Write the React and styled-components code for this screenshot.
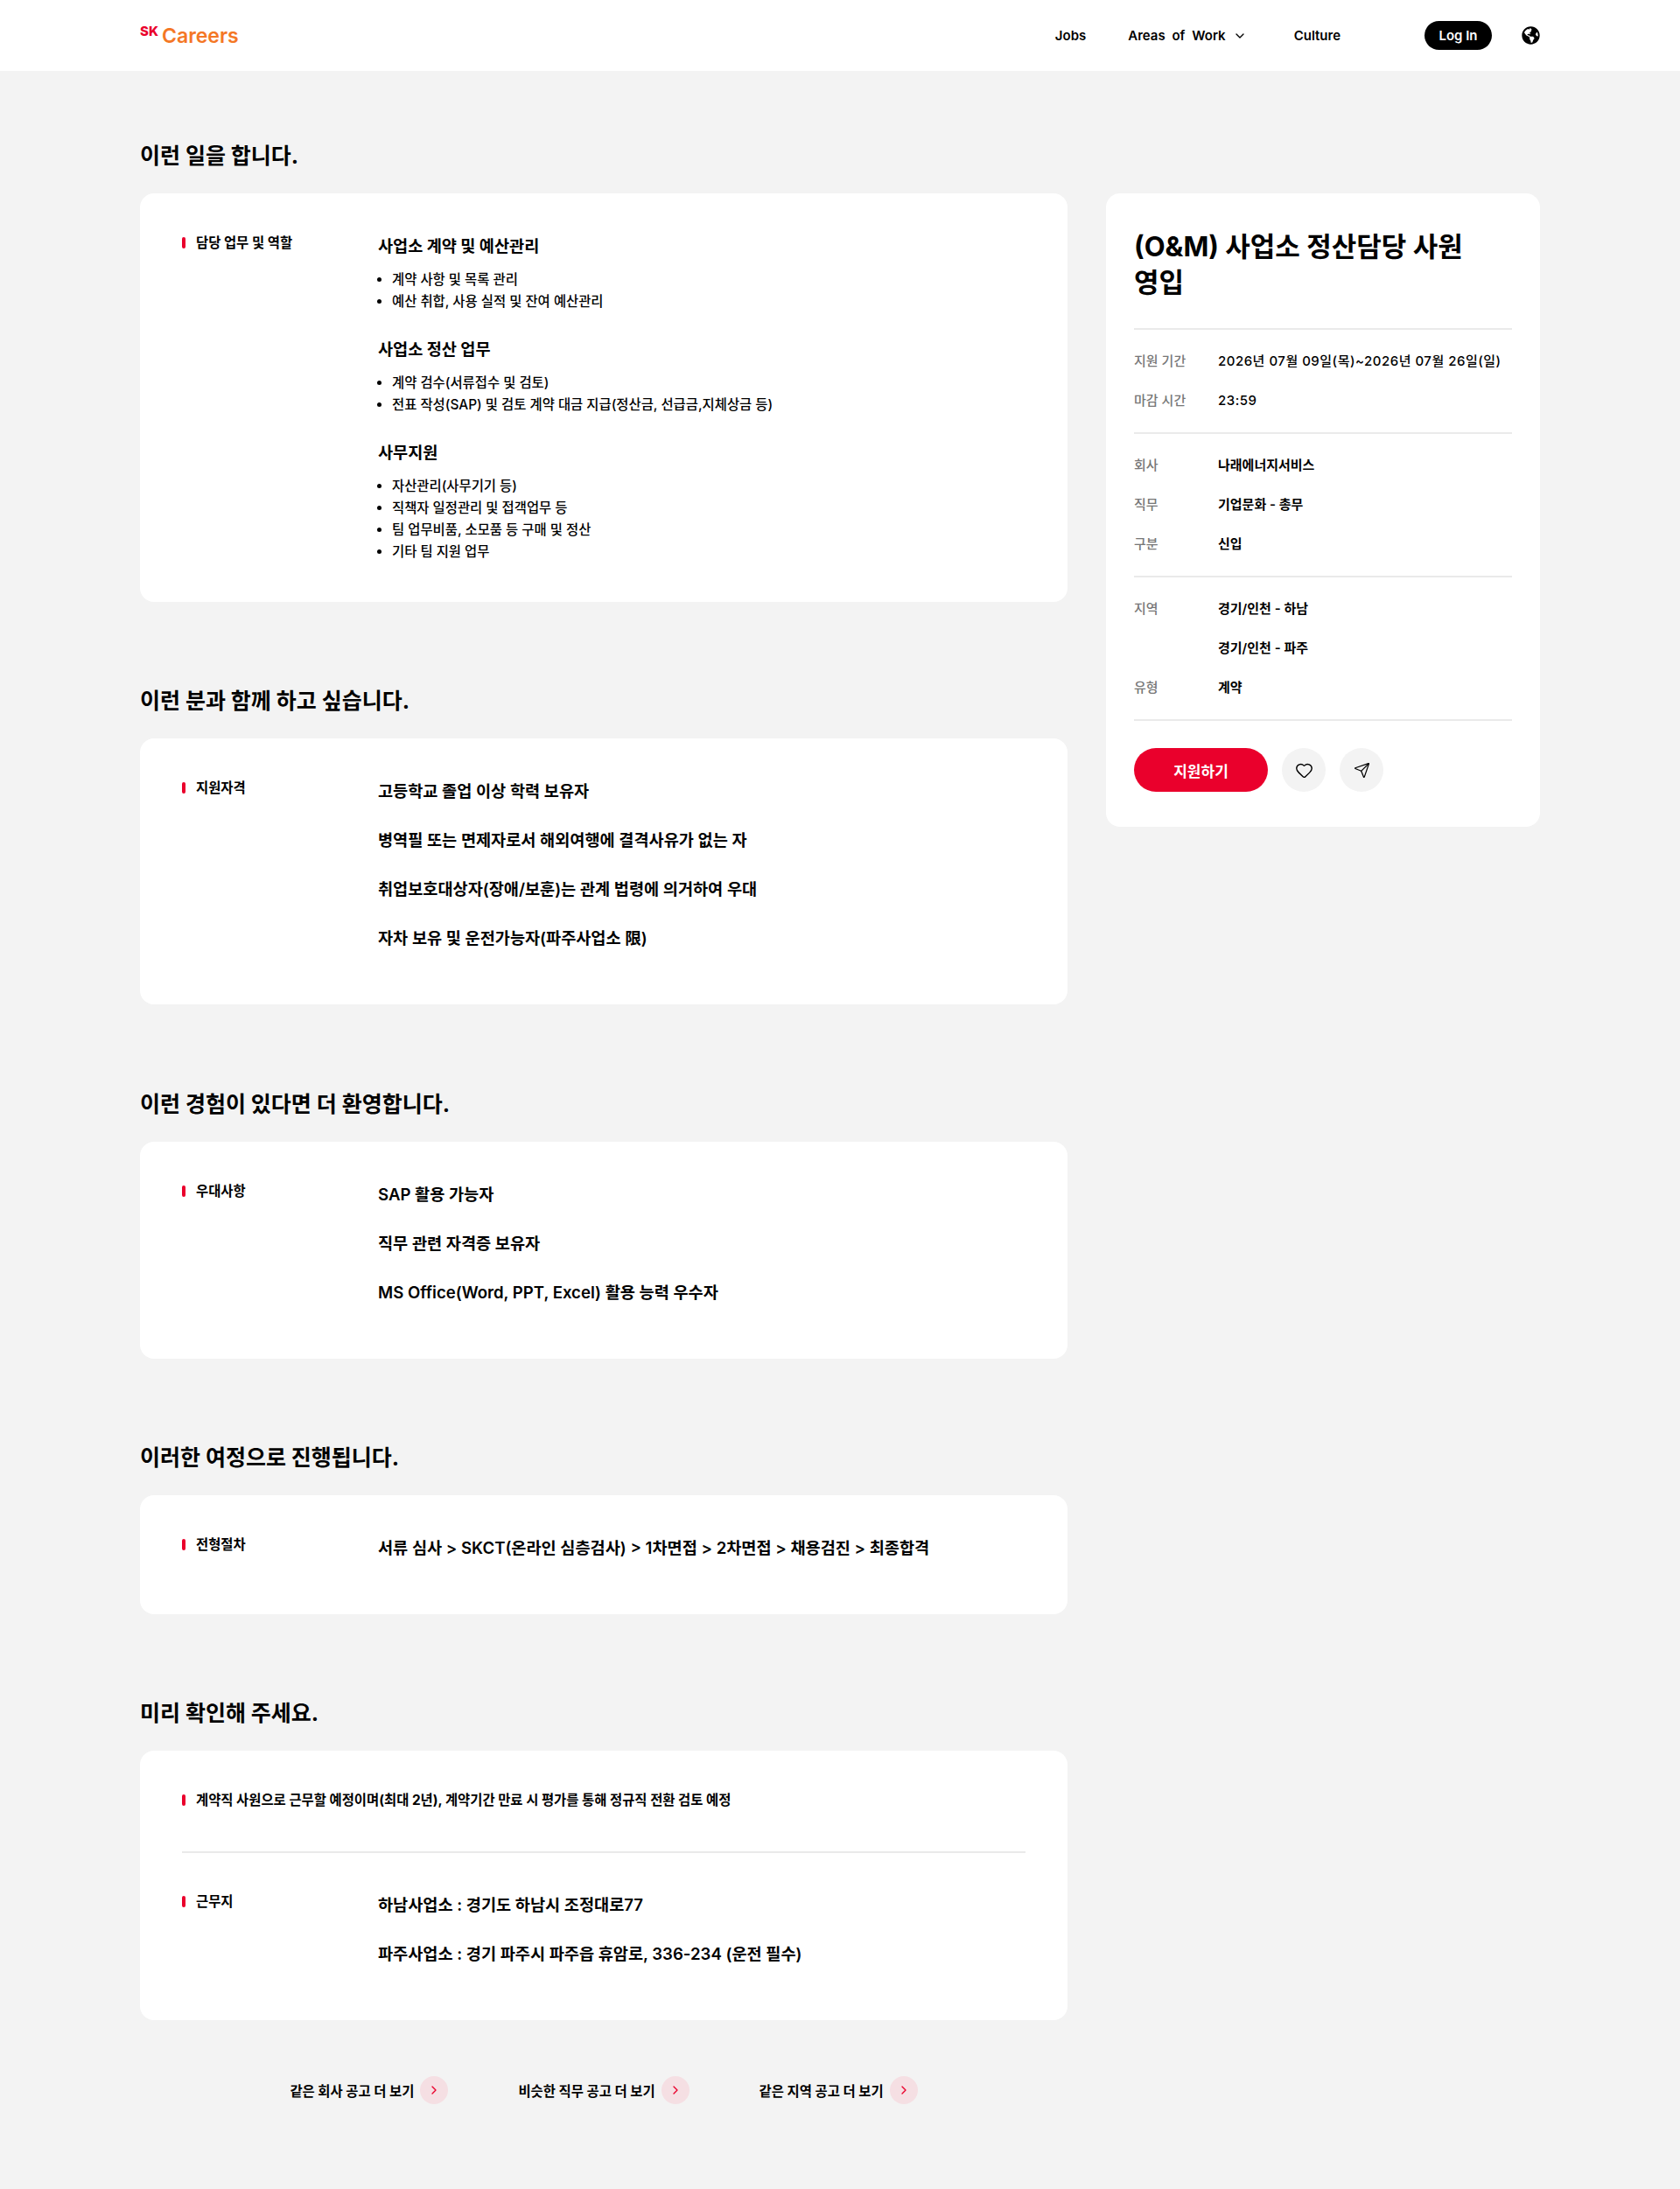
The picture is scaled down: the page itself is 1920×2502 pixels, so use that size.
import styled, { createGlobalStyle } from "styled-components";
import { ChevronDown, ChevronRight, Heart, Send } from "lucide-react";
import { FaGlobeAmericas } from "react-icons/fa";

const GlobalStyle = createGlobalStyle`
  * { box-sizing: border-box; }
  body {
    margin: 0;
    background: #f3f3f3;
    color: #000;
    font-family: "Inter", "Noto Sans CJK KR", sans-serif;
  }
`;

const Page = styled.div`
  min-height: 2502px;
  background: #f3f3f3;
`;

const Header = styled.header`
  height: 81px;
  background: #fff;
  padding: 0 160px;
  display: flex;
  align-items: center;
  justify-content: space-between;
`;

const Logo = styled.a`
  display: flex;
  align-items: flex-start;
  gap: 4px;
  font-family: "Inter", sans-serif;
  font-weight: 600;
`;

const LogoSk = styled.span`
  color: #ea002c;
  font-size: 15px;
  line-height: 14px;
  font-weight: 800;
`;

const LogoName = styled.span`
  color: #f47725;
  font-size: 23px;
  line-height: 24px;
`;

const Nav = styled.nav`
  display: flex;
  align-items: center;
  font-size: 15px;
  font-weight: 600;
  word-spacing: 4px;
`;

const NavLink = styled.a`
  display: flex;
  align-items: center;
  gap: 8px;
  margin-right: ${(p) => p.$gap}px;
`;

const LoginButton = styled.button`
  width: 77px;
  height: 33px;
  border: 0;
  border-radius: 17px;
  background: #000;
  color: #fff;
  font: inherit;
  margin-right: 34px;
`;

const Main = styled.main`
  padding: 79px 160px 0;
  display: flex;
  align-items: flex-start;
  gap: 44px;
`;

const LeftColumn = styled.div`
  width: 1060px;
`;

const Section = styled.section`
  margin-bottom: 95.3px;
  &:last-of-type { margin-bottom: 64px; }
`;

const Heading = styled.h2`
  margin: 0 0 25px;
  font-size: 25px;
  line-height: 36px;
  font-weight: 700;
`;

const Card = styled.div`
  background: #fff;
  border-radius: 16px;
  padding: 46px 48px ${(p) => p.$bottom}px;
`;

const Row = styled.div`
  display: flex;
`;

const Label = styled.div`
  width: ${(p) => (p.$wide ? "auto" : "224px")};
  flex-shrink: 0;
  padding-left: 16px;
  position: relative;
  font-size: 15.4px;
  line-height: 22px;
  font-weight: 700;

  &::before {
    content: "";
    position: absolute;
    left: 0;
    top: 4px;
    width: 4px;
    height: 13px;
    border-radius: 2px;
    background: #ea002c;
  }
`;

const Content = styled.div`
  flex: 1;
`;

const DutyGroup = styled.div`
  margin-bottom: 28px;
  &:last-child { margin-bottom: 0; }
`;

const Title = styled.h3`
  margin: 0 0 12px;
  font-size: 18.6px;
  line-height: 28px;
  font-weight: 700;
`;

const List = styled.ul`
  margin: 0;
  padding: 0 0 0 16px;
  font-size: 15.4px;
  line-height: 25px;
  font-weight: 500;
`;

const Text = styled.p`
  margin: 0 0 28px;
  font-size: 18.6px;
  line-height: 28px;
  font-weight: 600;
`;

const Divider = styled.hr`
  border: 0;
  height: 2px;
  background: #eaeaea;
  margin: ${(p) => p.$margin};
`;

const MoreLinks = styled.div`
  display: flex;
  justify-content: center;
  gap: 80px;
`;

const MoreLink = styled.a`
  display: flex;
  align-items: center;
  gap: 7px;
  font-size: 15.4px;
  font-weight: 700;
`;

const MoreIcon = styled.span`
  width: 32px;
  height: 32px;
  border-radius: 50%;
  background: #f5dfe3;
  color: #ea002c;
  display: flex;
  align-items: center;
  justify-content: center;
`;

const Panel = styled.aside`
  width: 496px;
  margin-top: 61px;
  background: #fff;
  border-radius: 16px;
  padding: 40px 32px;
`;

const JobTitle = styled.h1`
  margin: 0 0 32px;
  font-size: 31px;
  line-height: 41px;
  font-weight: 700;
  word-break: keep-all;
`;

const InfoGroup = styled.dl`
  margin: 0;
  padding: 25px 0 2px;
  border-top: 2px solid #eaeaea;
`;

const InfoRow = styled.div`
  display: flex;
  height: 45px;
  font-size: 15px;
  line-height: 22px;
`;

const InfoLabel = styled.dt`
  width: 96px;
  color: #777;
  font-weight: 500;
`;

const InfoValue = styled.dd`
  margin: 0;
  font-weight: ${(p) => (p.$regular ? 500 : 600)};
  letter-spacing: ${(p) => (p.$regular ? "0.5px" : "0")};
`;

const Actions = styled.div`
  display: flex;
  gap: 16px;
  border-top: 2px solid #eaeaea;
  padding-top: 31px;
`;

const ApplyButton = styled.button`
  width: 153px;
  height: 50px;
  border: 0;
  border-radius: 25px;
  background: #ea002c;
  color: #fff;
  font: inherit;
  font-size: 17px;
  font-weight: 700;
`;

const RoundButton = styled.button`
  width: 50px;
  height: 50px;
  border: 0;
  border-radius: 50%;
  background: #f3f3f3;
  color: #000;
  display: flex;
  align-items: center;
  justify-content: center;
`;

const sections = [
  {
    heading: "이런 분과 함께 하고 싶습니다.",
    label: "지원자격",
    items: [
      "고등학교 졸업 이상 학력 보유자",
      "병역필 또는 면제자로서 해외여행에 결격사유가 없는 자",
      "취업보호대상자(장애/보훈)는 관계 법령에 의거하여 우대",
      "자차 보유 및 운전가능자(파주사업소 限)",
    ],
  },
  {
    heading: "이런 경험이 있다면 더 환영합니다.",
    label: "우대사항",
    items: [
      "SAP 활용 가능자",
      "직무 관련 자격증 보유자",
      "MS Office(Word, PPT, Excel) 활용 능력 우수자",
    ],
  },
  {
    heading: "이러한 여정으로 진행됩니다.",
    label: "전형절차",
    items: ["서류 심사 > SKCT(온라인 심층검사) > 1차면접 > 2차면접 > 채용검진 > 최종합격"],
  },
];

const duties = [
  {
    title: "사업소 계약 및 예산관리",
    items: ["계약 사항 및 목록 관리", "예산 취합, 사용 실적 및 잔여 예산관리"],
  },
  {
    title: "사업소 정산 업무",
    items: [
      "계약 검수(서류접수 및 검토)",
      "전표 작성(SAP) 및 검토 계약 대금 지급(정산금, 선급금,지체상금 등)",
    ],
  },
  {
    title: "사무지원",
    items: [
      "자산관리(사무기기 등)",
      "직책자 일정관리 및 접객업무 등",
      "팀 업무비품, 소모품 등 구매 및 정산",
      "기타 팀 지원 업무",
    ],
  },
];

const infoGroups = [
  [
    ["지원 기간", "2026년 07월 09일(목)~2026년 07월 26일(일)", true],
    ["마감 시간", "23:59", true],
  ],
  [
    ["회사", "나래에너지서비스"],
    ["직무", "기업문화 - 총무"],
    ["구분", "신입"],
  ],
  [
    ["지역", "경기/인천 - 하남"],
    ["", "경기/인천 - 파주"],
    ["유형", "계약"],
  ],
];

export default function App() {
  return (
    <Page>
      <GlobalStyle />
      <Header>
        <Logo>
          <LogoSk>SK</LogoSk>
          <LogoName>Careers</LogoName>
        </Logo>
        <Nav>
          <NavLink $gap={48}>Jobs</NavLink>
          <NavLink $gap={54}>
            Areas of Work <ChevronDown size={16} />
          </NavLink>
          <NavLink $gap={96}>Culture</NavLink>
          <LoginButton>Log In</LoginButton>
          <FaGlobeAmericas size={21} />
        </Nav>
      </Header>
      <Main>
        <LeftColumn>
          <Section>
            <Heading>이런 일을 합니다.</Heading>
            <Card $bottom={45}>
              <Row>
                <Label>담당 업무 및 역할</Label>
                <Content>
                  {duties.map((d) => (
                    <DutyGroup key={d.title}>
                      <Title>{d.title}</Title>
                      <List>
                        {d.items.map((item) => (
                          <li key={item}>{item}</li>
                        ))}
                      </List>
                    </DutyGroup>
                  ))}
                </Content>
              </Row>
            </Card>
          </Section>
          {sections.map((s) => (
            <Section key={s.label}>
              <Heading>{s.heading}</Heading>
              <Card $bottom={34}>
                <Row>
                  <Label>{s.label}</Label>
                  <Content>
                    {s.items.map((item) => (
                      <Text key={item}>{item}</Text>
                    ))}
                  </Content>
                </Row>
              </Card>
            </Section>
          ))}
          <Section>
            <Heading>미리 확인해 주세요.</Heading>
            <Card $bottom={34}>
              <Label $wide>
                계약직 사원으로 근무할 예정이며(최대 2년), 계약기간 만료 시 평가를 통해 정규직 전환 검토 예정
              </Label>
              <Divider $margin="47px 0 45px" />
              <Row>
                <Label>근무지</Label>
                <Content>
                  <Text>하남사업소 : 경기도 하남시 조정대로77</Text>
                  <Text>파주사업소 : 경기 파주시 파주읍 휴암로, 336-234 (운전 필수)</Text>
                </Content>
              </Row>
            </Card>
          </Section>
          <MoreLinks>
            {["같은 회사 공고 더 보기", "비슷한 직무 공고 더 보기", "같은 지역 공고 더 보기"].map((t) => (
              <MoreLink key={t}>
                {t}
                <MoreIcon>
                  <ChevronRight size={16} />
                </MoreIcon>
              </MoreLink>
            ))}
          </MoreLinks>
        </LeftColumn>
        <Panel>
          <JobTitle>(O&M) 사업소 정산담당 사원 영입</JobTitle>
          {infoGroups.map((group, i) => (
            <InfoGroup key={i}>
              {group.map(([label, value, regular]) => (
                <InfoRow key={value}>
                  <InfoLabel>{label}</InfoLabel>
                  <InfoValue $regular={regular}>{value}</InfoValue>
                </InfoRow>
              ))}
            </InfoGroup>
          ))}
          <Actions>
            <ApplyButton>지원하기</ApplyButton>
            <RoundButton>
              <Heart size={21} strokeWidth={1.6} />
            </RoundButton>
            <RoundButton>
              <Send size={19} strokeWidth={1.6} />
            </RoundButton>
          </Actions>
        </Panel>
      </Main>
    </Page>
  );
}
